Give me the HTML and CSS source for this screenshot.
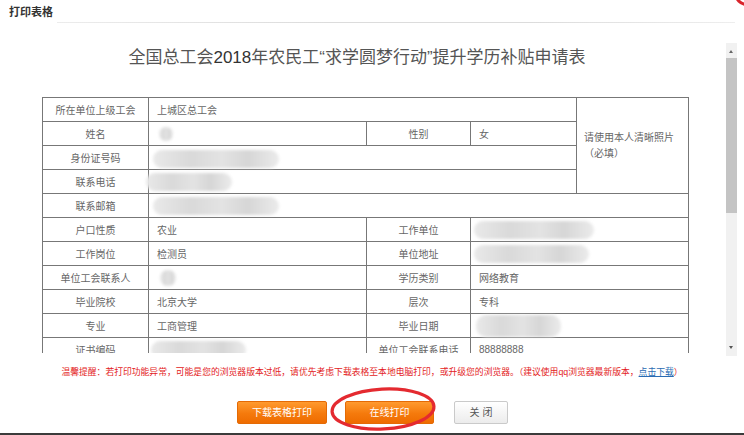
FILE: index.html
```html
<!DOCTYPE html>
<html lang="zh-CN">
<head>
<meta charset="utf-8">
<title>打印表格</title>
<link rel="stylesheet" href="styles.css">
</head>
<body>
<div class="dialog">
  <header class="dlg-head">
    <span class="dlg-title">打印表格</span>
    <span class="dlg-rule"></span>
  </header>
  <span class="close-ring"></span>

  <div class="viewport">
    <div class="doc">
      <h1 class="doc-title">全国总工会<span class="yr">2018</span>年农民工“求学圆梦行动”提升学历补贴申请表</h1>
      <table class="form">
        <colgroup>
          <col class="c1"><col class="c2"><col class="c3"><col class="c4"><col class="c5">
        </colgroup>
        <tr>
          <td class="lab">所在单位上级工会</td>
          <td class="val" colspan="3">上城区总工会</td>
          <td class="photo" rowspan="4">请使用本人清晰照片<br>（必填）</td>
        </tr>
        <tr>
          <td class="lab">姓名</td>
          <td class="val"><span class="blur b-name"></span></td>
          <td class="lab">性别</td>
          <td class="val">女</td>
        </tr>
        <tr>
          <td class="lab">身份证号码</td>
          <td class="val" colspan="3"><span class="blur b-id"></span></td>
        </tr>
        <tr>
          <td class="lab">联系电话</td>
          <td class="val" colspan="3"><span class="blur b-tel"></span></td>
        </tr>
        <tr>
          <td class="lab">联系邮箱</td>
          <td class="val" colspan="4"><span class="blur b-mail"></span></td>
        </tr>
        <tr>
          <td class="lab">户口性质</td>
          <td class="val">农业</td>
          <td class="lab">工作单位</td>
          <td class="val" colspan="2"><span class="blur b-work"></span></td>
        </tr>
        <tr>
          <td class="lab">工作岗位</td>
          <td class="val">检测员</td>
          <td class="lab">单位地址</td>
          <td class="val" colspan="2"><span class="blur b-addr"></span></td>
        </tr>
        <tr>
          <td class="lab">单位工会联系人</td>
          <td class="val"><span class="blur b-contact"></span></td>
          <td class="lab">学历类别</td>
          <td class="val" colspan="2">网络教育</td>
        </tr>
        <tr>
          <td class="lab">毕业院校</td>
          <td class="val">北京大学</td>
          <td class="lab">层次</td>
          <td class="val" colspan="2">专科</td>
        </tr>
        <tr>
          <td class="lab">专业</td>
          <td class="val">工商管理</td>
          <td class="lab">毕业日期</td>
          <td class="val" colspan="2"><span class="blur b-date"></span></td>
        </tr>
        <tr>
          <td class="lab">证书编码</td>
          <td class="val"><span class="blur b-cert"></span></td>
          <td class="lab">单位工会联系电话</td>
          <td class="val" colspan="2">88888888</td>
        </tr>
      </table>
    </div>
    <div class="scrollbar">
      <span class="arr arr-up"></span>
      <div class="track"><div class="thumb"></div></div>
      <span class="arr arr-down"></span>
    </div>
  </div>

  <p class="tip">温馨提醒：若打印功能异常，可能是您的浏览器版本过低，请优先考虑下载表格至本地电脑打印，或升级您的浏览器。（建议使用qq浏览器最新版本，<a class="dl" href="#">点击下载</a>）</p>

  <div class="actions">
    <button class="btn btn-orange btn-dl">下载表格打印</button>
    <button class="btn btn-orange btn-online">在线打印</button>
    <button class="btn btn-close">关 闭</button>
  </div>
  <svg class="mark" width="112" height="50" viewBox="0 0 112 50">
    <ellipse cx="55" cy="23" rx="51" ry="20" fill="none" stroke="#e42a30" stroke-width="3.2" transform="rotate(-3 55 23)"/>
  </svg>
  <div class="bottom-edge"></div>
</div>
</body>
</html>
```

FILE: styles.css
```css
html, body {
  margin: 0;
  padding: 0;
  background: #fff;
}

body {
  font-family: "Liberation Sans", "Noto Sans CJK SC", sans-serif;
  color: #555;
}

.dialog {
  position: relative;
  width: 744px;
  height: 435px;
  overflow: hidden;
}

.dlg-head {
  display: flex;
  align-items: stretch;
  height: 23px;
  padding-left: 9px;
}

.dlg-title {
  font-size: 11px;
  font-weight: bold;
  color: #333;
  line-height: 25px;
}

.dlg-rule {
  flex: 1;
  align-self: flex-end;
  height: 1px;
  margin: 0 9px 0 4px;
  background: linear-gradient(90deg, #ececec, #dcdcdc 40%, #dcdcdc 70%, #eeeeee);
}

.close-ring {
  position: absolute;
  right: -16px;
  top: -20px;
  width: 20px;
  height: 20px;
  border: 3px solid #d9252c;
  border-radius: 50%;
}

.viewport {
  display: flex;
  width: 737px;
  height: 310px;
  margin-top: 20px;
}

.doc {
  flex: 1;
  overflow: hidden;
}

.doc-title {
  margin: 0 0 24px;
  padding-right: 12px;
  font-size: 17px;
  font-weight: normal;
  line-height: 30px;
  text-align: center;
  color: #555;
}

.doc-title .yr {
  color: #333;
}

.form {
  margin-left: 42px;
  width: 646px;
  table-layout: fixed;
  border-collapse: collapse;
  font-size: 10px;
  color: #666;
}

.c1 { width: 106px; }
.c2 { width: 218px; }
.c3 { width: 104px; }
.c4 { width: 106px; }
.c5 { width: 112px; }

.form tr {
  height: 24px;
}

.form td {
  border: 1px solid #777;
  padding: 0;
  white-space: nowrap;
  overflow: visible;
}

.form .lab {
  text-align: center;
}

.form .val {
  padding-left: 8px;
  text-align: left;
}

.form .photo {
  padding: 0 2px 0 7px;
  line-height: 16px;
  vertical-align: middle;
  white-space: normal;
}

.blur {
  display: inline-block;
  vertical-align: middle;
  height: 18px;
  border-radius: 9px;
  background: linear-gradient(90deg, #e9e9e9, #d9d9d9 30%, #e3e3e3 55%, #d6d6d6 75%, #ebebeb);
  filter: blur(1.4px);
}

.b-name { width: 14px; height: 14px; margin-left: 2px; border-radius: 7px; }
.b-id { width: 126px; margin-left: -4px; margin-top: 2px; }
.b-tel { width: 86px; margin-left: -11px; }
.b-mail { width: 126px; margin-left: -4px; }
.b-contact { width: 16px; height: 16px; margin-left: 3px; border-radius: 8px; }
.b-work { width: 120px; margin-left: -5px; }
.b-addr { width: 115px; margin-left: -5px; }
.b-date { width: 85px; height: 22px; margin-left: -3px; border-radius: 10px; }
.b-cert { width: 95px; margin-left: -6px; }

.scrollbar {
  display: flex;
  flex-direction: column;
  width: 11px;
  height: 313px;
  background: #f1f1f1;
}

.arr {
  display: block;
  height: 15px;
  position: relative;
}

.arr::after {
  content: "";
  position: absolute;
  left: 3px;
  width: 0;
  height: 0;
  border-left: 2.5px solid transparent;
  border-right: 2.5px solid transparent;
}

.arr-up::after {
  top: 7px;
  border-bottom: 3px solid #666;
}

.arr-down::after {
  top: 5px;
  border-top: 3px solid #555;
}

.track {
  flex: 1;
}

.thumb {
  height: 155px;
  background: #c4c4c4;
}

.tip {
  margin: 12px 0 0;
  font-size: 8.8px;
  line-height: 14px;
  text-align: center;
  color: #e31b23;
  white-space: nowrap;
}

.tip .dl {
  color: #2b6cb3;
  text-decoration: underline;
}

.actions {
  display: flex;
  justify-content: center;
  margin-top: 22px;
  padding-left: 1px;
}

.btn {
  height: 23px;
  padding: 0;
  border-radius: 2px;
  font-family: "Liberation Sans", "Noto Sans CJK SC", sans-serif;
  font-size: 10px;
  line-height: 21px;
  cursor: pointer;
}

.btn-orange {
  color: #fff;
  border: 1px solid #e46a05;
  background: linear-gradient(#ff9a2f, #f57a0c 55%, #ee6c00);
}

.btn-dl {
  width: 90px;
  margin-right: 18px;
}

.btn-online {
  width: 89px;
  margin-right: 20px;
}

.btn-close {
  width: 54px;
  color: #555;
  border: 1px solid #cacaca;
  background: linear-gradient(#ffffff, #ececec);
}

.mark {
  position: absolute;
  left: 328px;
  top: 386px;
}

.bottom-edge {
  height: 2px;
  margin-top: 9px;
  background: #3b3b3b;
}
```
